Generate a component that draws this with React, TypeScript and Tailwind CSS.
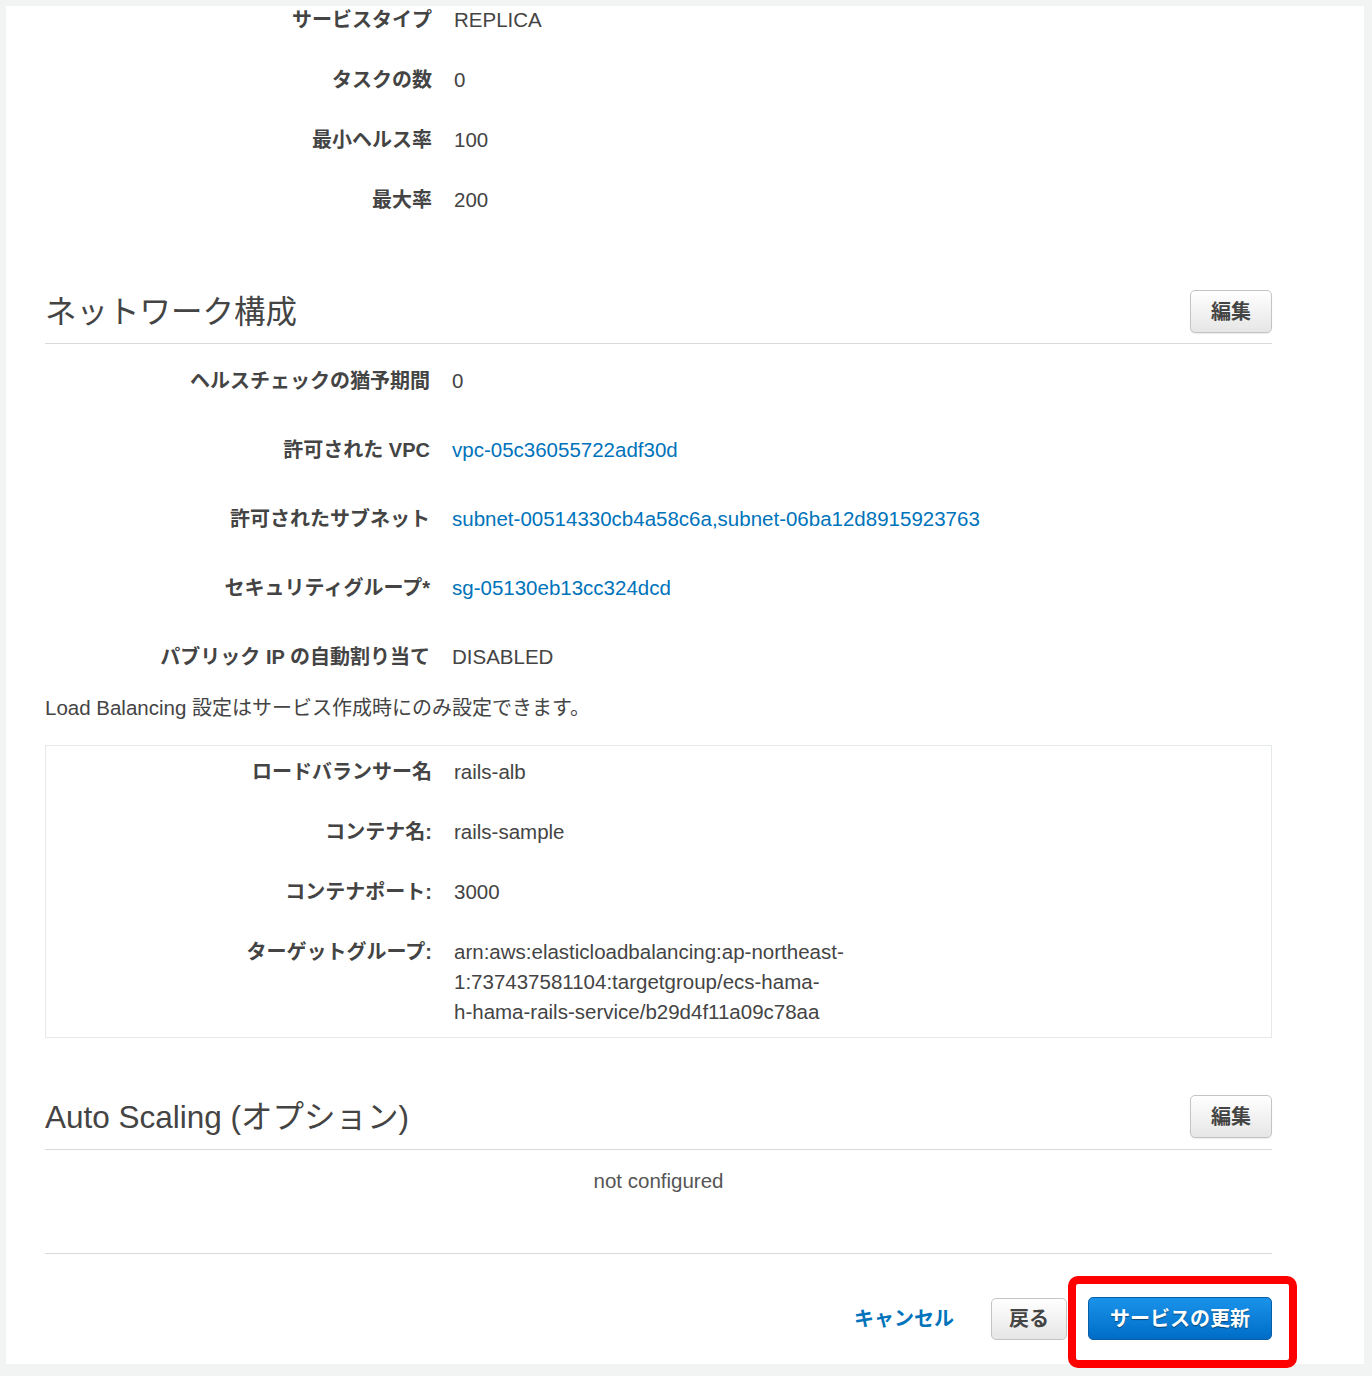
import React from "react";

const font = {
  fontFamily: '"Liberation Sans", Arial, "Noto Sans CJK JP", sans-serif',
};

function Row({
  label,
  children,
  labelW,
}: {
  label: string;
  children: React.ReactNode;
  labelW: string;
}) {
  return (
    <div className="flex leading-[28px]">
      <div className={`${labelW} shrink-0 text-right font-bold text-[#444]`}>{label}</div>
      <div className="ml-[22px] text-[#444] text-[20.5px]">{children}</div>
    </div>
  );
}

function EditButton() {
  return (
    <button className="w-[82px] h-[43px] rounded-[5px] border border-[#c4c4c4] bg-gradient-to-b from-[#ffffff] to-[#e6e6e6] font-bold text-[20px] text-[#444] shadow-[0_1px_1px_rgba(0,0,0,0.08)]">
      編集
    </button>
  );
}

function Link({ children }: { children: React.ReactNode }) {
  return <span className="text-[#0073bb]">{children}</span>;
}

export default function App() {
  return (
    <div className="w-full h-[1376px] bg-[#f2f3f3] pt-[6px] pl-[6px]" style={font}>
      <div className="w-[1358px] h-[1358px] bg-white text-[20px]">
        <div className="ml-[39px] w-[1227px] flex flex-col">
          {/* Section 1 */}
          <div className="flex flex-col gap-[32px]">
            <Row label="サービスタイプ" labelW="w-[387px]">REPLICA</Row>
            <Row label="タスクの数" labelW="w-[387px]">0</Row>
            <Row label="最小ヘルス率" labelW="w-[387px]">100</Row>
            <Row label="最大率" labelW="w-[387px]">200</Row>
          </div>

          {/* Network heading */}
          <div className="mt-[76px] flex items-center justify-between pb-[10px] border-b border-[#d9d9d9]">
            <h2 className="text-[31.5px] text-[#444] leading-[40px] font-normal">ネットワーク構成</h2>
            <EditButton />
          </div>

          <div className="mt-[23px] flex flex-col gap-[41px]">
            <Row label="ヘルスチェックの猶予期間" labelW="w-[385px]">0</Row>
            <Row label="許可された VPC" labelW="w-[385px]">
              <Link>vpc-05c36055722adf30d</Link>
            </Row>
            <Row label="許可されたサブネット" labelW="w-[385px]">
              <Link>subnet-00514330cb4a58c6a,subnet-06ba12d8915923763</Link>
            </Row>
            <Row label="セキュリティグループ*" labelW="w-[385px]">
              <Link>sg-05130eb13cc324dcd</Link>
            </Row>
            <Row label="パブリック IP の自動割り当て" labelW="w-[385px]">DISABLED</Row>
          </div>

          <div className="mt-[23px] leading-[28px] text-[#444]">
            <span className="text-[20.5px]">Load Balancing</span> 設定はサービス作成時にのみ設定できます。
          </div>

          <div className="mt-[23px] border border-[#e6e9e9] pt-[11px] pb-[10px] flex flex-col gap-[30px]">
            {[
              ["ロードバランサー名", "rails-alb"],
              ["コンテナ名:", "rails-sample"],
              ["コンテナポート:", "3000"],
            ].map(([l, v]) => (
              <div key={l} className="flex leading-[30px]">
                <div className="w-[386px] shrink-0 text-right font-bold text-[#444]">{l}</div>
                <div className="ml-[22px] text-[#444] text-[20.5px]">{v}</div>
              </div>
            ))}
            <div className="flex leading-[30px]">
              <div className="w-[386px] shrink-0 text-right font-bold text-[#444]">ターゲットグループ:</div>
              <div className="ml-[22px] text-[#444] text-[20.5px]">
                arn:aws:elasticloadbalancing:ap-northeast-
                <br />
                1:737437581104:targetgroup/ecs-hama-
                <br />
                h-hama-rails-service/b29d4f11a09c78aa
              </div>
            </div>
          </div>

          {/* Auto Scaling heading */}
          <div className="mt-[57px] flex items-center justify-between pb-[11px] border-b border-[#d9d9d9]">
            <h2 className="text-[31.5px] text-[#444] leading-[40px] font-normal">Auto Scaling (オプション)</h2>
            <EditButton />
          </div>

          <div className="mt-[17px] leading-[28px] text-center text-[#555] text-[20.5px]">not configured</div>

          <div className="mt-[58px] border-t border-[#d9d9d9]" />

          <div className="mt-[43px] flex items-center justify-end">
            <span className="font-bold text-[#0073bb] leading-[28px]">キャンセル</span>
            <button className="ml-[37px] w-[76px] h-[42px] rounded-[5px] border border-[#c4c4c4] bg-gradient-to-b from-[#ffffff] to-[#e6e6e6] font-bold text-[20px] text-[#444]">
              戻る
            </button>
            <div className="relative ml-[21px]">
              <button className="w-[184px] h-[43px] rounded-[5px] border border-[#0a5ea8] bg-gradient-to-b from-[#1a93ea] to-[#006dc7] font-bold text-[20px] text-white [text-shadow:0_1px_1px_rgba(0,0,0,0.45)]">
                サービスの更新
              </button>
              <span className="absolute -left-[20px] -right-[25px] -top-[21px] -bottom-[28px] border-[8px] border-[#ff0000] rounded-[10px] pointer-events-none" />
            </div>
          </div>
        </div>
      </div>
    </div>
  );
}
